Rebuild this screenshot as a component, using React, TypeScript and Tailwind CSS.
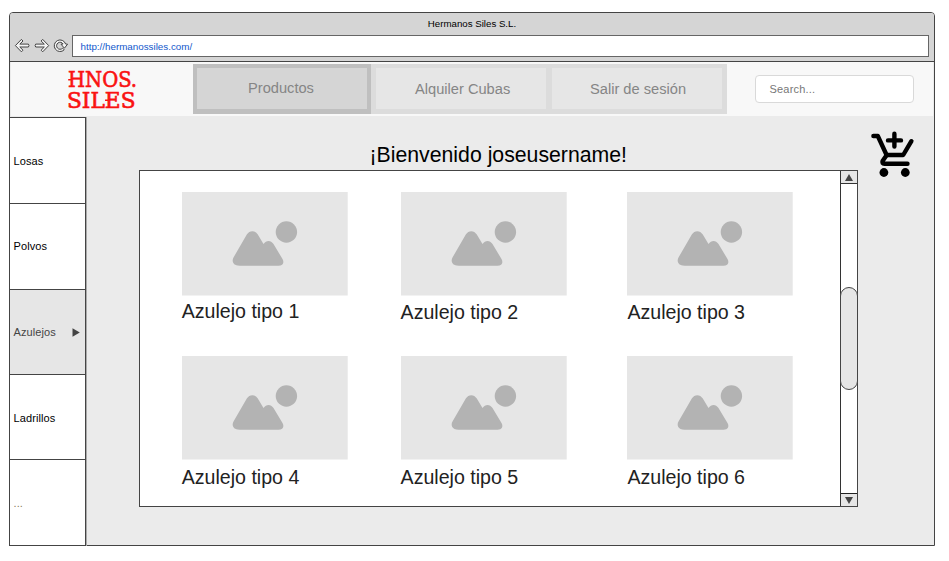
import React from "react";

function BrowserBar() {
  return (
    <div className="h-[49px] rounded-t-[3px] border-b border-[#444] bg-[#d5d5d5]">
      <div className="h-[22px] pt-[4px] text-center text-[9.7px] leading-[13px] text-black">Hermanos Siles S.L.</div>
      <div className="flex h-[22px]">
        <svg className="block h-[22px] w-[62px] shrink-0" viewBox="10 35 62 22" fill="#f4f4f4" stroke="#444" strokeWidth="1" strokeLinejoin="round">
          <path d="M15.4 45.6 L21.4 39.4 L23 41 L19.8 44.1 H28.4 Q29.6 45.5 28.4 47 H19.8 L23 50.2 L21.4 51.8 Z" />
          <path d="M48.7 45.6 L42.7 39.4 L41.1 41 L44.3 44.1 H35.7 Q34.5 45.5 35.7 47 H44.3 L41.1 50.2 L42.7 51.8 Z" />
          <path d="M65.6 44 A5.8 5.8 0 1 0 64.2 49.8 L62.6 48.2 A3.5 3.5 0 1 1 63.1 44 L61 44.2 L64.4 48.2 L67.6 44.2 Z" />
        </svg>
        <div className="h-[22px] w-[857px] border border-[#666] bg-white pl-[7.5px] text-[9.8px] leading-[21px] text-[#1158cc]">
          http://hermanossiles.com/
        </div>
      </div>
    </div>
  );
}

function Header() {
  return (
    <header className="mx-px flex h-[54px] bg-[#f8f8f8]">
      <svg className="ml-[53px] block h-[54px] w-[76px] shrink-0" viewBox="64 62 76 54" fill="#fa1212" stroke="#fa1212" strokeWidth="0.6" fontFamily="'DejaVu Serif Condensed','DejaVu Serif',serif" fontSize="22.6">
        <text>
          <tspan x="68" y="87.4" textLength="69" lengthAdjust="spacingAndGlyphs">HNOS.</tspan>
          <tspan x="67" y="108.2" textLength="68.5" lengthAdjust="spacingAndGlyphs">SILES</tspan>
        </text>
        <path d="M68.2 79.8 H71 M105 100.2 H108" strokeWidth="1.4" />
      </svg>
      <nav className="ml-[53px] mt-[2px] flex h-[50px] w-[534px] text-[14.65px] text-[#858585]">
        <div className="w-[178px] border-[4px] border-b-[5px] border-[#bfbfbf] bg-[#d5d5d5] pl-[51px] leading-[41px]">
          Productos
        </div>
        <div className="flex flex-1 gap-[6px] bg-[#dcdcdc] pt-[4px] pb-[5px] pl-[5px] pr-[5px]">
          <div className="w-[170px] bg-[#e6e6e6] pl-[39px] leading-[43px]">Alquiler Cubas</div>
          <div className="w-[170px] bg-[#e6e6e6] pl-[38px] leading-[43px]">Salir de sesión</div>
        </div>
      </nav>
      <div className="ml-[28px] mt-[13px] h-[28px] w-[159px] rounded-[4px] border border-[#d9d9d9] bg-white pl-[13.5px] text-[11px] leading-[27px] tracking-[0.2px] text-[#777]">
        Search...
      </div>
    </header>
  );
}

const categories = [
  { label: "Losas", style: "h-[86px] pt-[2px] text-black bg-white" },
  { label: "Polvos", style: "h-[86px] text-black bg-white" },
  { label: "Azulejos", style: "h-[85px] text-[#444] bg-[#e6e6e6]", active: true },
  { label: "Ladrillos", style: "h-[85px] pt-[2px] text-black bg-white" },
  { label: "...", style: "h-[86px] pt-[2px] text-[#8a7a5c] bg-white" },
];

function Sidebar() {
  return (
    <aside className="-ml-px mt-px h-[429px] w-[77px] shrink-0 border-b border-r border-[#444] shadow-[1px_0_0_#aaa]">
      {categories.map((c) => (
        <div
          key={c.label}
          className={`${c.style} flex items-center justify-between border-l border-t border-[#444] pl-[3.5px] pr-[5px] text-[11px] tracking-[0.1px]`}
        >
          <span>{c.label}</span>
          {c.active && (
            <svg className="block h-[9px] w-[8px]" viewBox="0 0 8 9" fill="#444">
              <path d="M0.5 0.3 L7.8 4.5 L0.5 8.7 Z" />
            </svg>
          )}
        </div>
      ))}
    </aside>
  );
}

function Product({ name, offset }: { name: string; offset: string }) {
  return (
    <div className="w-[166px]">
      <svg className="block h-[103.5px] w-[166px]" viewBox="0 0 166 103.5" fill="#b3b3b3">
        <rect width="165.7" height="103.5" fill="#e6e6e6" />
        <path d="M57.5 73.7 C51 73.7 49.5 69 51.5 65.5 L64.8 42.5 C67.5 38 73 38 75.8 42.5 L81.5 52 C84 48.5 88.5 47.5 91.5 52 L100.5 67 C102.5 70.5 101 73.7 96.5 73.7 Z" />
        <circle cx="104.4" cy="40" r="10.7" />
      </svg>
      <div className={`${offset} whitespace-nowrap text-[19.6px] leading-[24px] text-[#222]`}>{name}</div>
    </div>
  );
}

function Scrollbar() {
  return (
    <div className="flex w-[17.5px] shrink-0 flex-col border-l border-[#333] bg-white">
      <div className="flex h-[13px] items-center justify-center border-b border-[#333] bg-[#e6e6e6]">
        <svg className="block h-[7px] w-[8px]" viewBox="0 0 8 7" fill="#444"><path d="M4 0 L8 7 H0 Z" /></svg>
      </div>
      <div className="-mx-px mt-[103px] h-[103px] rounded-full border border-[#444] bg-[#e6e6e6]" />
      <div className="mt-auto flex h-[13px] items-center justify-center border-t border-[#222] bg-[#e6e6e6]">
        <svg className="block h-[7px] w-[8px]" viewBox="0 0 8 7" fill="#444"><path d="M4 7 L8 0 H0 Z" /></svg>
      </div>
    </div>
  );
}

function CartIcon() {
  return (
    <svg className="block h-[50px] w-[48px]" viewBox="868 130 48 50" fill="none" stroke="#000" strokeWidth="4.4" strokeLinecap="round" strokeLinejoin="round">
      <path d="M873.4 136 H877.8 L886.6 155 H903.2 L911.4 141.2" />
      <path d="M886.4 155.5 L882.6 161 Q881.6 163.7 884.5 163.8 H907.5" />
      <path d="M894.4 133.8 V146.6 M888 140.4 H901" />
      <g fill="#000" stroke="none">
        <circle cx="883.9" cy="172.5" r="4.4" />
        <circle cx="905.3" cy="172.5" r="4.4" />
      </g>
    </svg>
  );
}

export default function App() {
  return (
    <div className="h-[561px] w-[949px] overflow-hidden bg-white pl-[9px] pt-[12px] font-['Liberation_Sans',Arial,sans-serif]">
      <div className="h-[534px] w-[926px] rounded-t-[4px] border border-[#444] bg-[#ebebeb]">
        <BrowserBar />
        <Header />
        <div className="flex h-[429px]">
          <Sidebar />
          <main className="ml-[53px] w-[719px] pt-[26px]">
            <h1 className="h-[28px] pl-[230.5px] text-[21.25px] leading-[27px] text-black">¡Bienvenido joseusername!</h1>
            <div className="flex h-[337px] w-[719px] border border-[#444] bg-white">
              <div className="grid flex-1 grid-cols-[218.9px_226.8px_166px] grid-rows-[132px_132px] content-start gap-y-[32px] pl-[41.7px] pt-[21px]">
                <Product name="Azulejo tipo 1" offset="mt-[3.5px]" />
                <Product name="Azulejo tipo 2" offset="mt-[4.5px]" />
                <Product name="Azulejo tipo 3" offset="mt-[4.5px]" />
                <Product name="Azulejo tipo 4" offset="mt-[5.5px]" />
                <Product name="Azulejo tipo 5" offset="mt-[5.5px]" />
                <Product name="Azulejo tipo 6" offset="mt-[5.5px]" />
              </div>
              <Scrollbar />
            </div>
          </main>
          <div className="ml-[10px] pt-[14px]">
            <CartIcon />
          </div>
        </div>
      </div>
    </div>
  );
}
